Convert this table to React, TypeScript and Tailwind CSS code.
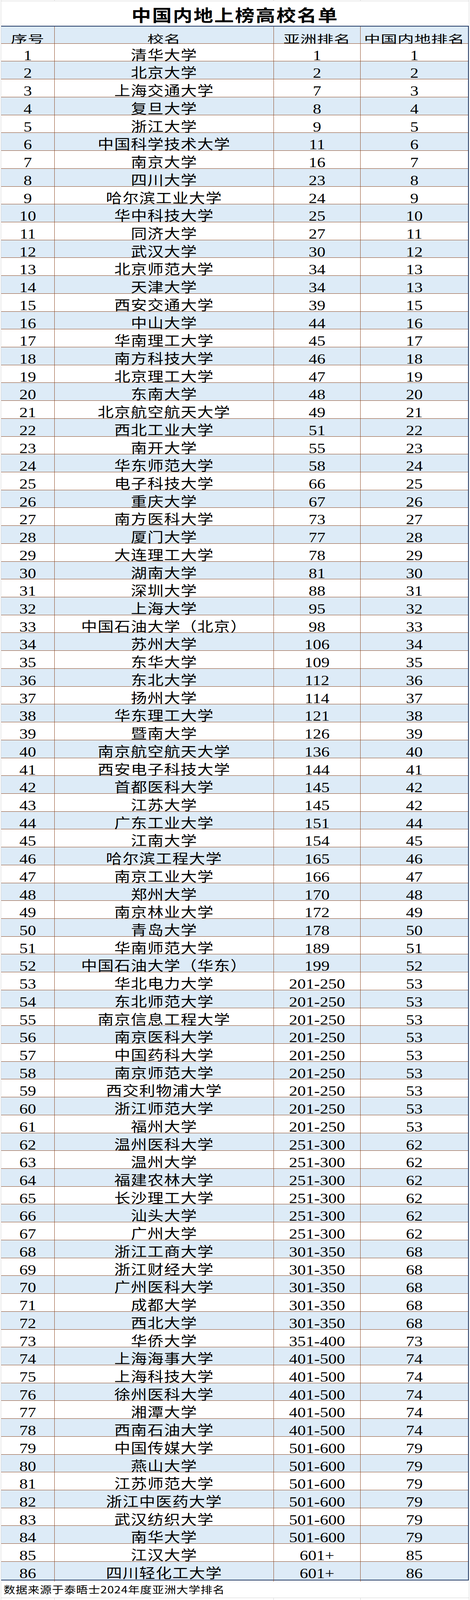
import React from 'react';

const data: [string, string, string][] = [
  ['清华大学', '1', '1'],
  ['北京大学', '2', '2'],
  ['上海交通大学', '7', '3'],
  ['复旦大学', '8', '4'],
  ['浙江大学', '9', '5'],
  ['中国科学技术大学', '11', '6'],
  ['南京大学', '16', '7'],
  ['四川大学', '23', '8'],
  ['哈尔滨工业大学', '24', '9'],
  ['华中科技大学', '25', '10'],
  ['同济大学', '27', '11'],
  ['武汉大学', '30', '12'],
  ['北京师范大学', '34', '13'],
  ['天津大学', '34', '13'],
  ['西安交通大学', '39', '15'],
  ['中山大学', '44', '16'],
  ['华南理工大学', '45', '17'],
  ['南方科技大学', '46', '18'],
  ['北京理工大学', '47', '19'],
  ['东南大学', '48', '20'],
  ['北京航空航天大学', '49', '21'],
  ['西北工业大学', '51', '22'],
  ['南开大学', '55', '23'],
  ['华东师范大学', '58', '24'],
  ['电子科技大学', '66', '25'],
  ['重庆大学', '67', '26'],
  ['南方医科大学', '73', '27'],
  ['厦门大学', '77', '28'],
  ['大连理工大学', '78', '29'],
  ['湖南大学', '81', '30'],
  ['深圳大学', '88', '31'],
  ['上海大学', '95', '32'],
  ['中国石油大学（北京）', '98', '33'],
  ['苏州大学', '106', '34'],
  ['东华大学', '109', '35'],
  ['东北大学', '112', '36'],
  ['扬州大学', '114', '37'],
  ['华东理工大学', '121', '38'],
  ['暨南大学', '126', '39'],
  ['南京航空航天大学', '136', '40'],
  ['西安电子科技大学', '144', '41'],
  ['首都医科大学', '145', '42'],
  ['江苏大学', '145', '42'],
  ['广东工业大学', '151', '44'],
  ['江南大学', '154', '45'],
  ['哈尔滨工程大学', '165', '46'],
  ['南京工业大学', '166', '47'],
  ['郑州大学', '170', '48'],
  ['南京林业大学', '172', '49'],
  ['青岛大学', '178', '50'],
  ['华南师范大学', '189', '51'],
  ['中国石油大学（华东）', '199', '52'],
  ['华北电力大学', '201-250', '53'],
  ['东北师范大学', '201-250', '53'],
  ['南京信息工程大学', '201-250', '53'],
  ['南京医科大学', '201-250', '53'],
  ['中国药科大学', '201-250', '53'],
  ['南京师范大学', '201-250', '53'],
  ['西交利物浦大学', '201-250', '53'],
  ['浙江师范大学', '201-250', '53'],
  ['福州大学', '201-250', '53'],
  ['温州医科大学', '251-300', '62'],
  ['温州大学', '251-300', '62'],
  ['福建农林大学', '251-300', '62'],
  ['长沙理工大学', '251-300', '62'],
  ['汕头大学', '251-300', '62'],
  ['广州大学', '251-300', '62'],
  ['浙江工商大学', '301-350', '68'],
  ['浙江财经大学', '301-350', '68'],
  ['广州医科大学', '301-350', '68'],
  ['成都大学', '301-350', '68'],
  ['西北大学', '301-350', '68'],
  ['华侨大学', '351-400', '73'],
  ['上海海事大学', '401-500', '74'],
  ['上海科技大学', '401-500', '74'],
  ['徐州医科大学', '401-500', '74'],
  ['湘潭大学', '401-500', '74'],
  ['西南石油大学', '401-500', '74'],
  ['中国传媒大学', '501-600', '79'],
  ['燕山大学', '501-600', '79'],
  ['江苏师范大学', '501-600', '79'],
  ['浙江中医药大学', '501-600', '79'],
  ['武汉纺织大学', '501-600', '79'],
  ['南华大学', '501-600', '79'],
  ['江汉大学', '601+', '85'],
  ['四川轻化工大学', '601+', '86'],
];

const cols = 'grid grid-cols-[137px_561px_222px_275px]';
const numCell = 'flex items-center justify-center pt-[8px]';
const cjkCell = 'flex items-center justify-center pt-[4px]';
const numText = "scale-y-[0.8466] text-[43px] leading-none text-black font-[family-name:'Liberation_Serif',serif]";
const cjkText = "scale-y-[0.8466] text-[41px] leading-none tracking-[1.5px] text-black font-[family-name:'Noto_Sans_CJK_SC',sans-serif]";
const brown = 'border-[#8c4a26]';

function GridStrip({ h }: { h: string }) {
  // faint spreadsheet gridlines above / below the table
  return (
    <div className={`${cols} ${h}`}>
      <div className="border-r border-[#d4d4d4]" />
      <div className="border-r border-[#d4d4d4]" />
      <div className="border-r border-[#d4d4d4]" />
      <div />
    </div>
  );
}

export default function App() {
  return (
    <div className="w-[1203px] h-[4096px] overflow-hidden bg-white">
      <div className="ml-[2px] w-[1199px] h-full border-l border-r border-[#d4d4d4]">
        <GridStrip h="h-[2px]" />

        {/* Title */}
        <div className="h-[64px] border-t border-[#d4d4d4] flex items-center justify-center pt-[2px]">
          <h1 className="scale-y-[0.8466] text-[50px] leading-none font-bold tracking-[3px] text-black font-[family-name:'Noto_Sans_CJK_SC',sans-serif]">
            中国内地上榜高校名单
          </h1>
        </div>

        {/* Table */}
        <div className="w-[1197px] border-t-2 border-r-2 border-b-2 border-[#1f3864]">
          <div className={`${cols} h-[43.75px] border-b ${brown} bg-[#ddebf7]`}>
            {['序号', '校名', '亚洲排名', '中国内地排名'].map((t, i) => (
              <div
                key={t}
                className={`flex items-center justify-center pt-[9px] ${i < 3 ? `border-r ${brown}` : ''}`}
              >
                <span className="scale-y-[0.66] text-[42px] leading-none tracking-[1px] text-black font-[family-name:'Noto_Sans_CJK_SC',sans-serif]">
                  {t}
                </span>
              </div>
            ))}
          </div>

          {data.map(([name, asia, cn], i) => (
            <div
              key={i}
              className={`${cols} h-[45.72px] ${i < data.length - 1 ? `border-b ${brown}` : ''} ${i % 2 === 1 ? 'bg-[#ddebf7]' : 'bg-white'}`}
            >
              <div className={`${numCell} border-r ${brown}`}>
                <span className={numText}>{i + 1}</span>
              </div>
              <div className={`${cjkCell} border-r ${brown}`}>
                <span className={cjkText}>{name}</span>
              </div>
              <div className={`${numCell} border-r ${brown}`}>
                <span className={numText}>{asia}</span>
              </div>
              <div className={numCell}>
                <span className={numText}>{cn}</span>
              </div>
            </div>
          ))}
        </div>

        {/* Source note */}
        <div className="h-[45.7px] border-b border-[#d4d4d4] flex items-center pl-[6px]">
          <span className="scale-y-[0.8466] origin-left text-[30px] leading-none tracking-[1px] text-black font-[family-name:'Noto_Sans_CJK_SC',sans-serif]">
            数据来源于泰晤士2024年度亚洲大学排名
          </span>
        </div>

        <GridStrip h="h-[4.3px]" />
      </div>
    </div>
  );
}
